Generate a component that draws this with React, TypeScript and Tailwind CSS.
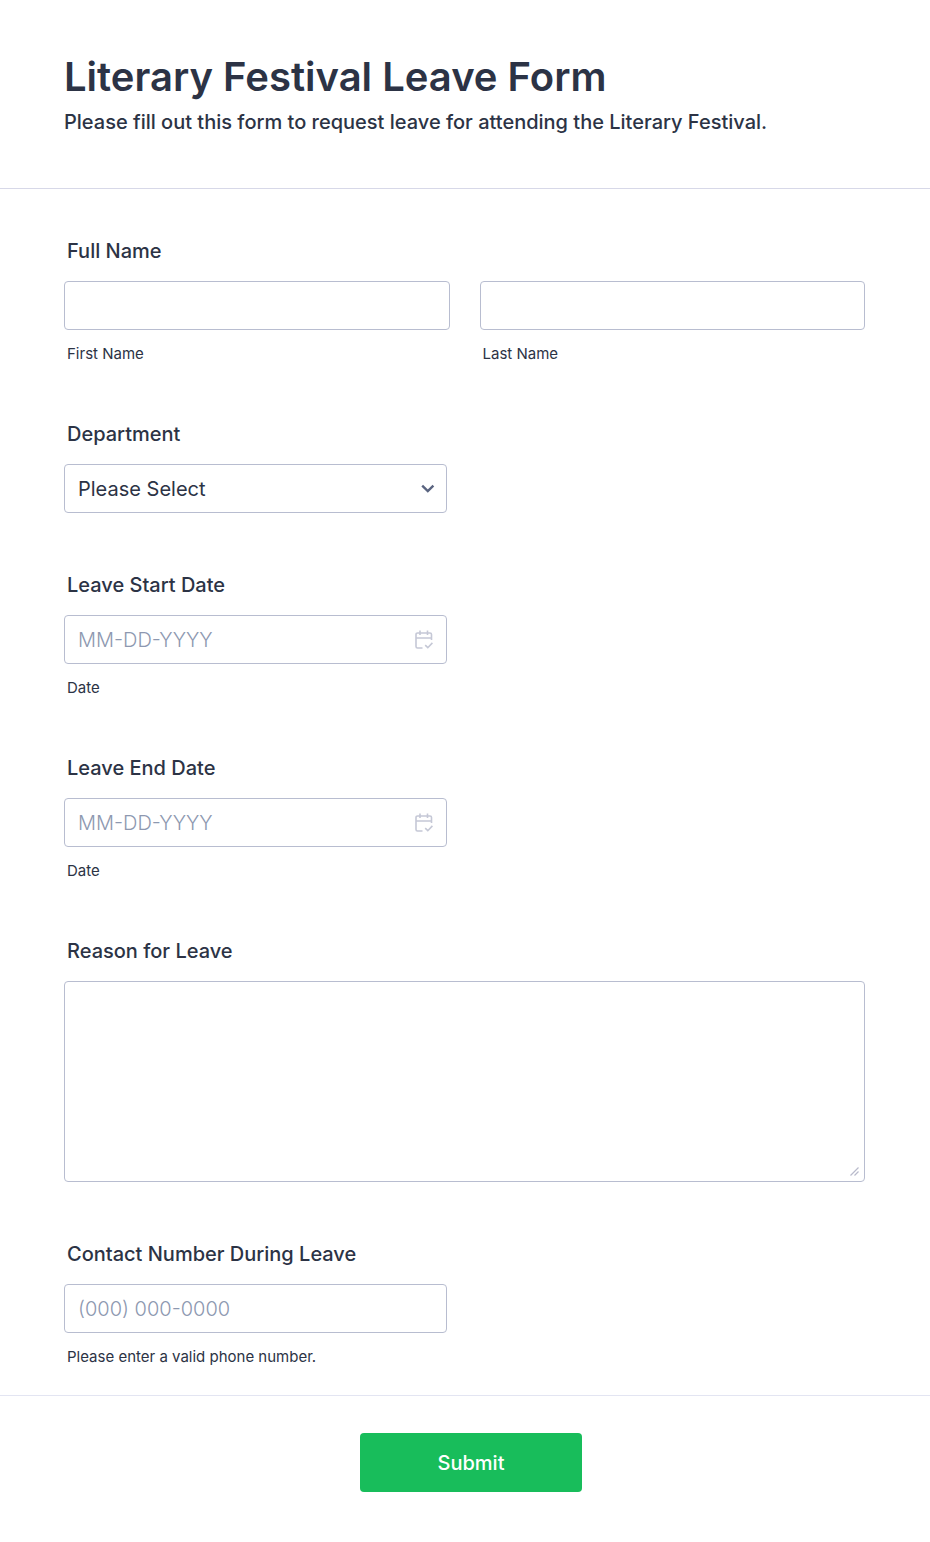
import { useState } from "react";
import type { ReactNode } from "react";

const fieldClass =
  "block h-[49px] w-full rounded border border-[#b8bdd0] bg-white px-[13px] text-xl text-[#2c3345] outline-none placeholder:font-light placeholder:text-[#8d98b0] placeholder:opacity-100 focus:border-blue-500";

type FieldProps = {
  id: string;
  label: string;
  hint?: string;
  children: ReactNode;
};

// One question: label on top, the control, and an optional hint below
function Field({ id, label, hint, children }: FieldProps) {
  return (
    <div>
      <label htmlFor={id} className="mb-[18px] block px-[3px] text-xl leading-6 font-medium">
        {label}
      </label>
      {children}
      {hint && <Hint htmlFor={id}>{hint}</Hint>}
    </div>
  );
}

function Hint({ htmlFor, children }: { htmlFor: string; children: ReactNode }) {
  return (
    <label htmlFor={htmlFor} className="mt-4 block px-[3px] text-[15px] leading-4">
      {children}
    </label>
  );
}

function CalendarIcon() {
  return (
    <svg width="18" height="20" viewBox="0 0 18 20" fill="none" stroke="currentColor" strokeWidth="1.6">
      <path d="M16.5 10V4.5a1.5 1.5 0 0 0-1.5-1.5H2.5A1.5 1.5 0 0 0 1 4.5v12A1.5 1.5 0 0 0 2.5 18H7.5" />
      <path d="M1 8h15.5M5 0.5V5M12.5 0.5V5" />
      <path d="M10.2 15.2l2.6 2.5 4.6-4.8" />
    </svg>
  );
}

function DateInput({ id }: { id: string }) {
  return (
    <div className="relative max-w-[383px]">
      <input id={id} type="text" placeholder="MM-DD-YYYY" className={fieldClass} />
      <button
        type="button"
        aria-label="Choose date"
        className="absolute inset-y-0 right-[14px] flex items-center text-[#c5c8d6]"
      >
        <CalendarIcon />
      </button>
    </div>
  );
}

function App() {
  const [department, setDepartment] = useState("");

  return (
    <form
      className="bg-white font-['Inter',sans-serif] text-[#2c3345]"
      onSubmit={(e) => e.preventDefault()}
    >
      <header className="border-b border-[#d7d8e8] pt-[52px] pr-[65px] pb-[54px] pl-16">
        <h1 className="text-[40px] leading-[50px] font-semibold">Literary Festival Leave Form</h1>
        <p className="mt-2 text-xl leading-6 font-medium">
          Please fill out this form to request leave for attending the Literary Festival.
        </p>
      </header>

      <div className="flex flex-col gap-[60px] pt-[50px] pr-[65px] pb-[30px] pl-16">
        <fieldset>
          <legend className="mb-[18px] px-[3px] text-xl leading-6 font-medium">Full Name</legend>
          <div className="grid grid-cols-2 gap-[30px]">
            <div>
              <input id="first" type="text" className={fieldClass} />
              <Hint htmlFor="first">First Name</Hint>
            </div>
            <div>
              <input id="last" type="text" className={fieldClass} />
              <Hint htmlFor="last">Last Name</Hint>
            </div>
          </div>
        </fieldset>

        <Field id="department" label="Department">
          <div className="relative max-w-[383px]">
            <select
              id="department"
              value={department}
              onChange={(e) => setDepartment(e.target.value)}
              className={`${fieldClass} appearance-none`}
            >
              <option value="">Please Select</option>
            </select>
            <svg
              className="pointer-events-none absolute top-5 right-3 text-[#5a6480]"
              width="14"
              height="9"
              viewBox="0 0 14 9"
              fill="none"
              stroke="currentColor"
              strokeWidth="2.4"
            >
              <path d="M1.2 1.6L6.8 7l5.6-5.4" />
            </svg>
          </div>
        </Field>

        <Field id="start" label="Leave Start Date" hint="Date">
          <DateInput id="start" />
        </Field>

        <Field id="end" label="Leave End Date" hint="Date">
          <DateInput id="end" />
        </Field>

        <Field id="reason" label="Reason for Leave">
          <div className="relative">
            <textarea
              id="reason"
              className="block h-[201px] w-full resize-none rounded border border-[#b8bdd0] bg-white px-[13px] py-3 text-xl outline-none focus:border-blue-500"
            />
            <svg
              className="pointer-events-none absolute right-[6px] bottom-[6px] text-[#b9bacb]"
              width="9"
              height="9"
              viewBox="0 0 9 9"
              stroke="currentColor"
              strokeWidth="1.2"
            >
              <path d="M0.5 8.5l8-8M4.5 8.5l4-4" />
            </svg>
          </div>
        </Field>

        <Field id="phone" label="Contact Number During Leave" hint="Please enter a valid phone number.">
          <div className="max-w-[383px]">
            <input id="phone" type="tel" placeholder="(000) 000-0000" className={fieldClass} />
          </div>
        </Field>
      </div>

      <footer className="flex justify-center border-t border-[#e3e5f2] pt-[37px] pb-[50px] pl-3">
        <button
          type="submit"
          className="h-[59px] w-[222px] rounded bg-[#18bd5b] text-xl font-medium text-white"
        >
          Submit
        </button>
      </footer>
    </form>
  );
}

export default App;
